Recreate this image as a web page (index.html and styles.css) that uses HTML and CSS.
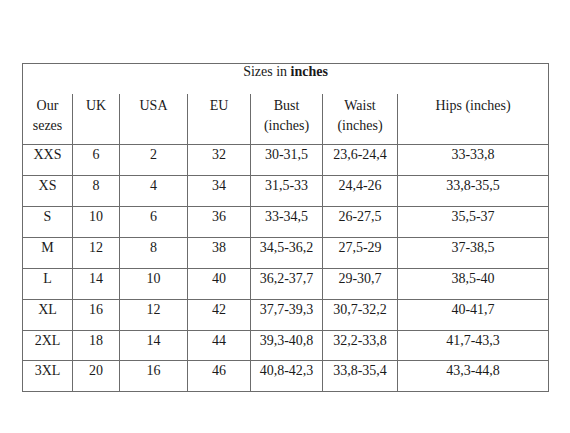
FILE: index.html
```html
<!DOCTYPE html>
<html lang="en">
<head>
<meta charset="utf-8">
<title>Sizes in inches</title>
<link rel="stylesheet" href="styles.css">
</head>
<body>
<div class="page">
  <table class="sizes">
    <colgroup>
      <col class="c1"><col class="c2"><col class="c3"><col class="c4"><col class="c5"><col class="c6"><col class="c7">
    </colgroup>
    <tr class="title-row"><td colspan="7">Sizes in <b>inches</b></td></tr>
    <tr class="head-row">
      <td>Our<br>sezes</td><td>UK</td><td>USA</td><td>EU</td><td>Bust<br>(inches)</td><td>Waist<br>(inches)</td><td>Hips (inches)</td>
    </tr>
    <tr><td>XXS</td><td>6</td><td>2</td><td>32</td><td>30-31,5</td><td>23,6-24,4</td><td>33-33,8</td></tr>
    <tr><td>XS</td><td>8</td><td>4</td><td>34</td><td>31,5-33</td><td>24,4-26</td><td>33,8-35,5</td></tr>
    <tr><td>S</td><td>10</td><td>6</td><td>36</td><td>33-34,5</td><td>26-27,5</td><td>35,5-37</td></tr>
    <tr><td>M</td><td>12</td><td>8</td><td>38</td><td>34,5-36,2</td><td>27,5-29</td><td>37-38,5</td></tr>
    <tr><td>L</td><td>14</td><td>10</td><td>40</td><td>36,2-37,7</td><td>29-30,7</td><td>38,5-40</td></tr>
    <tr><td>XL</td><td>16</td><td>12</td><td>42</td><td>37,7-39,3</td><td>30,7-32,2</td><td>40-41,7</td></tr>
    <tr class="short"><td>2XL</td><td>18</td><td>14</td><td>44</td><td>39,3-40,8</td><td>32,2-33,8</td><td>41,7-43,3</td></tr>
    <tr><td>3XL</td><td>20</td><td>16</td><td>46</td><td>40,8-42,3</td><td>33,8-35,4</td><td>43,3-44,8</td></tr>
  </table>
</div>
</body>
</html>
```
FILE: styles.css
```css
html, body {
  margin: 0;
  padding: 0;
  background: #ffffff;
}

.page {
  padding: 63px 0 0 22px;
}

.sizes {
  border-collapse: collapse;
  table-layout: fixed;
  width: 526px;
  font-family: "Liberation Serif", "Times New Roman", serif;
  font-size: 14px;
  color: #1a1a1a;
}

.c1 { width: 50px; }
.c2 { width: 47px; }
.c3 { width: 68px; }
.c4 { width: 63px; }
.c5 { width: 72px; }
.c6 { width: 75px; }
.c7 { width: 151px; }

.sizes td {
  border: 1px solid #6c6c6c;
  text-align: center;
  vertical-align: top;
  padding: 0;
  line-height: 20px;
  height: 31px;
  box-sizing: border-box;
}

.title-row td {
  border-bottom: none;
  height: 30px;
  line-height: 16px;
  padding-top: 0;
}

.head-row td {
  border-top: none;
  height: 51px;
  padding-top: 2px;
}

.sizes .short td {
  height: 30px;
}

.sizes b {
  font-weight: bold;
}
```
